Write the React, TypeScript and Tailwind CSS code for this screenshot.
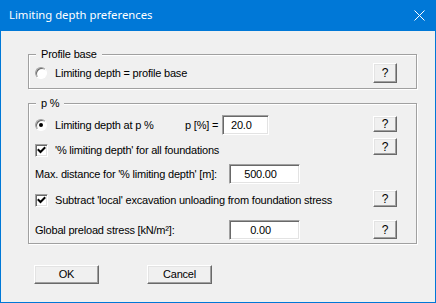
import React from "react";

const font = { fontFamily: '"Liberation Sans", Arial, sans-serif' };

function HelpBtn({ h = 20, mt = 0 }: { h?: number; mt?: number }) {
  return (
    <div
      className="w-[24px] shrink-0 self-start flex items-center justify-center bg-[#f0f0f0] border border-t-white border-l-white border-b-[#696969] border-r-[#696969] shadow-[inset_-1px_-1px_0_#a0a0a0,inset_1px_1px_0_#e3e3e3] text-[12px] text-black"
      style={{ height: h, marginTop: mt }}
    >
      ?
    </div>
  );
}

function Radio({ checked }: { checked?: boolean }) {
  return (
    <div className="w-[12px] h-[12px] shrink-0 rounded-full border border-t-[#a0a0a0] border-l-[#a0a0a0] border-b-white border-r-white bg-white shadow-[inset_1px_1px_0_#696969] flex items-center justify-center">
      {checked && <div className="w-[4px] h-[4px] rounded-full bg-black" />}
    </div>
  );
}

function Check() {
  return (
    <div className="w-[13px] h-[13px] shrink-0 border border-t-[#a0a0a0] border-l-[#a0a0a0] border-b-white border-r-white bg-white shadow-[inset_1px_1px_0_#696969,inset_-1px_-1px_0_#e3e3e3] flex items-center justify-center">
      <svg width="9" height="9" viewBox="0 0 9 9">
        <polyline points="1.5,4 3.5,6 7.5,2" fill="none" stroke="#000" strokeWidth="2" strokeLinecap="square" />
      </svg>
    </div>
  );
}

function Input({ w, value, cls }: { w: number; value: string; cls: string }) {
  return (
    <div
      className={`h-[20px] shrink-0 bg-white border border-t-[#a0a0a0] border-l-[#a0a0a0] border-b-white border-r-white shadow-[inset_1px_1px_0_#696969,inset_-1px_-1px_0_#e3e3e3] flex items-center text-[11px] text-black ${cls}`}
      style={{ width: w }}
    >
      {value}
    </div>
  );
}

export default function App() {
  return (
    <div
      className="w-[436px] h-[303px] bg-[#0078d7] flex flex-col px-[1px] pb-[1px] tracking-[-0.2px]"
      style={font}
    >
      <div className="h-[31px] shrink-0 flex items-center pl-[8px] pr-[10px] text-white">
        <span className="text-[11.3px] tracking-normal" style={{ fontFamily: '"Noto Sans", "Open Sans", sans-serif' }}>
          Limiting depth preferences
        </span>
        <div className="flex-1" />
        <svg width="11" height="11" viewBox="0 0 11 11">
          <path d="M0.5 0.5 L10.5 10.5 M10.5 0.5 L0.5 10.5" stroke="#fff" strokeWidth="1" />
        </svg>
      </div>
      <div className="flex-1 bg-[#f0f0f0] flex flex-col text-[11px] text-black">
        {/* Group 1 */}
        <div className="relative mt-[23px] ml-[27px] w-[389px] h-[35px] border border-[#a0a0a0] shadow-[inset_1px_1px_0_#fff,1px_1px_0_#fff]">
          <span className="absolute left-[7px] top-[-8px] px-[5px] bg-[#f0f0f0] leading-[14px]">
            Profile base
          </span>
          <div className="mt-[8px] h-[20px] flex items-center pl-[6px] pr-[19px]">
            <Radio />
            <span className="ml-[8px]">Limiting depth = profile base</span>
            <div className="flex-1" />
            <HelpBtn h={20} />
          </div>
        </div>

        {/* Group 2 */}
        <div className="relative mt-[14px] ml-[27px] w-[389px] h-[141px] border border-[#a0a0a0] shadow-[inset_1px_1px_0_#fff,1px_1px_0_#fff] flex flex-col pl-[6px] pr-[19px]">
          <span className="absolute left-[7px] top-[-8px] px-[5px] bg-[#f0f0f0] leading-[14px]">
            p %
          </span>
          {/* Row A */}
          <div className="mt-[11px] h-[20px] flex items-center">
            <Radio checked />
            <span className="ml-[8px] w-[130px]">Limiting depth at p %</span>
            <span className="w-[37px]">p [%] =</span>
            <Input w={47} value="20.0" cls="pl-[8px]" />
            <div className="flex-1" />
            <HelpBtn h={16} mt={1} />
          </div>
          {/* Row B */}
          <div className="mt-[3px] h-[24px] flex items-center">
            <Check />
            <span className="ml-[7px]">'% limiting depth' for all foundations</span>
            <div className="flex-1" />
            <HelpBtn h={17} />
          </div>
          {/* Row C */}
          <div className="mt-[2px] h-[20px] flex items-center">
            <span className="w-[194px]">Max. distance for '% limiting depth' [m]:</span>
            <Input w={71} value="500.00" cls="justify-center pr-[8px]" />
          </div>
          {/* Row D */}
          <div className="mt-[6px] h-[20px] flex items-center">
            <Check />
            <span className="ml-[7px]">Subtract 'local' excavation unloading from foundation stress</span>
            <div className="flex-1" />
            <HelpBtn h={17} />
          </div>
          {/* Row E */}
          <div className="mt-[10px] h-[20px] flex items-center">
            <span className="w-[194px]">Global preload stress [kN/m²]:</span>
            <Input w={71} value="0.00" cls="justify-center pr-[8px]" />
            <div className="flex-1" />
            <HelpBtn h={19} />
          </div>
        </div>

        {/* Buttons */}
        <div className="mt-[21px] flex pl-[33px] gap-[48px]">
          <div className="w-[65px] h-[19px] flex items-center justify-center bg-[#f0f0f0] border border-t-white border-l-white border-b-[#696969] border-r-[#696969] shadow-[inset_-1px_-1px_0_#a0a0a0,inset_1px_1px_0_#e3e3e3]">
            OK
          </div>
          <div className="w-[65px] h-[19px] flex items-center justify-center bg-[#f0f0f0] border border-t-white border-l-white border-b-[#696969] border-r-[#696969] shadow-[inset_-1px_-1px_0_#a0a0a0,inset_1px_1px_0_#e3e3e3]">
            Cancel
          </div>
        </div>
      </div>
    </div>
  );
}
